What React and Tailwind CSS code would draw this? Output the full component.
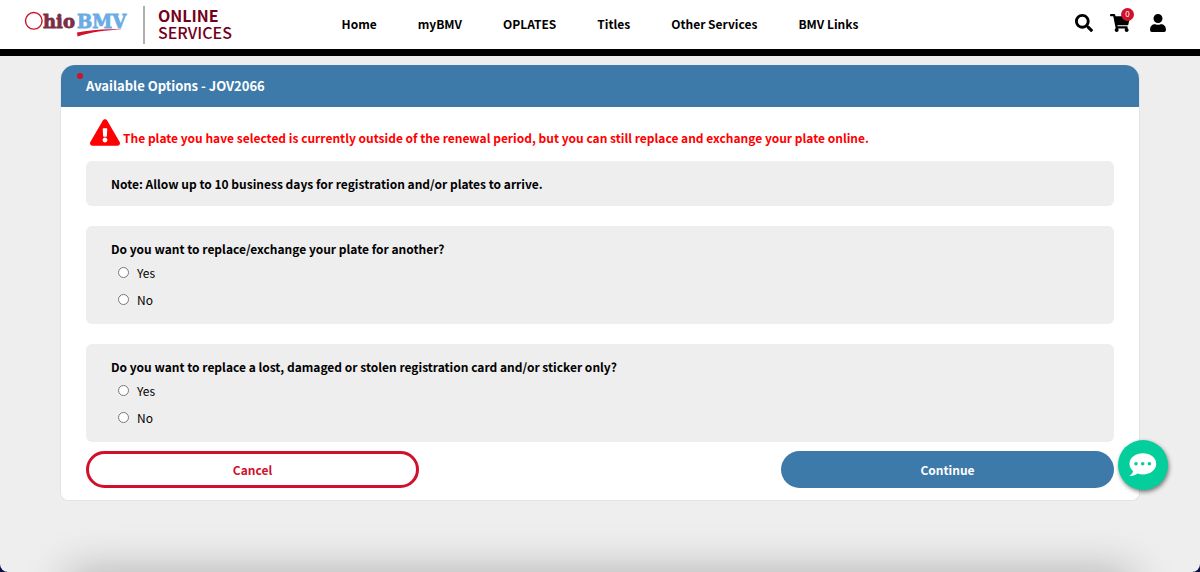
import { FaExclamationTriangle, FaSearch, FaShoppingCart, FaUser } from "react-icons/fa";

const navLinks = ["Home", "myBMV", "OPLATES", "Titles", "Other Services", "BMV Links"];

const questions = [
  { name: "exchange", text: "Do you want to replace/exchange your plate for another?" },
  {
    name: "replace",
    text: "Do you want to replace a lost, damaged or stolen registration card and/or sticker only?",
  },
];

function Logo() {
  return (
    <svg className="mb-1" width="104" height="30" viewBox="0 0 104 30" role="img" aria-label="Ohio BMV">
      <circle cx="9.8" cy="12.8" r="8.3" fill="none" stroke="#d0112b" strokeWidth="1.4" />
      <g fontFamily="DejaVu Serif" fontWeight="700" strokeWidth="0.8">
        <text x="19" y="20" fontSize="18" fill="#7a2f45" stroke="#7a2f45">hio</text>
        <text x="53" y="20" fontSize="18" fill="#6cace4" stroke="#6cace4">BMV</text>
      </g>
      <path d="M53 24.500C66 21.800 82 20.500 99 21.600C82 22 66 24.500 53.500 28.500Z" fill="#d0112b" />
    </svg>
  );
}

function Header() {
  return (
    <header className="grid grid-cols-[1fr_auto_1fr] items-center border-b-[7px] border-black bg-white">
      <a href="#" className="flex h-[49px] items-center pl-6">
        <Logo />
        <span className="ml-[15px] border-l-2 border-[#b0b0b0] pt-px pb-[3px] pl-[13px] text-base leading-[17px] text-[#73001c]">
          <span className="block font-bold">ONLINE</span>
          <span className="block font-medium">SERVICES</span>
        </span>
      </a>

      <nav className="flex gap-[41px] pb-0.5 font-bold">
        {navLinks.map((label) => (
          <a key={label} href="#" className="whitespace-nowrap">
            {label}
          </a>
        ))}
      </nav>

      <div className="flex items-center justify-end gap-[17px] pr-[34px] pb-1">
        <button type="button" aria-label="Search">
          <FaSearch className="size-[18px]" />
        </button>
        <button type="button" aria-label="Cart" className="relative mr-[3px]">
          <FaShoppingCart className="h-[18px] w-5" />
          <span className="absolute -top-1.5 -right-1 flex size-[13px] items-center justify-center rounded-full bg-[#d0112b] text-[8px] leading-none text-white">
            0
          </span>
        </button>
        <button type="button" aria-label="Account">
          <FaUser className="h-[18px] w-4" />
        </button>
      </div>
    </header>
  );
}

function Question({ name, text }) {
  return (
    <fieldset className="mb-5 rounded-md bg-[#eee] px-[25px] pt-3 pb-[11px] last-of-type:mb-0">
      <legend className="float-left w-full font-bold leading-[21px]">{text}</legend>
      {["Yes", "No"].map((option) => (
        <div key={option} className="clear-both flex h-[27px] items-center pl-[7px]">
          <label className="flex items-center gap-2">
            <input type="radio" name={name} value={option} className="size-[11px]" />
            {option}
          </label>
        </div>
      ))}
    </fieldset>
  );
}

function ChatButton() {
  return (
    <button
      type="button"
      aria-label="Chat"
      className="fixed right-8 bottom-[82px] flex size-[50px] items-center justify-center rounded-full bg-[#04ce9b] shadow-[1px_2px_4px_rgba(0,0,0,0.5)]"
    >
      <svg width="28" height="24" viewBox="0 0 28 24">
        <path
          d="M14 0.300C6.500 0.300 0.500 4.800 0.500 10.800C0.500 13.800 1.800 16.300 4 18.100C3.800 20 2.500 21.800 0.200 23C3.500 23.400 6.500 22.300 8.500 20.600C10.200 21.200 12 21.500 14 21.500C21.500 21.500 27.200 16.800 27.200 10.800C27.200 4.800 21.500 0.300 14 0.300Z"
          fill="#fff"
        />
        <circle cx="7" cy="10.8" r="1.8" fill="#04ce9b" />
        <circle cx="13.7" cy="10.8" r="1.8" fill="#04ce9b" />
        <circle cx="20.4" cy="10.8" r="1.8" fill="#04ce9b" />
      </svg>
    </button>
  );
}

export default function App() {
  return (
    <div className="bg-[#0b0b45]">
      <div className="relative min-h-screen overflow-hidden rounded-b-lg bg-[#eee] font-['Noto_Sans_CJK_SC',sans-serif] text-xs leading-5 text-black">
        <Header />

        <main className="mx-[5%] mt-[9px]">
          <section className="rounded-t-[14px] rounded-b-lg border border-t-0 border-[#e3e3e3] bg-white">
            {/* Card title */}
            <div className="relative rounded-t-[14px] bg-[#3d7aaa] px-[25px] py-[11px] text-white">
              <span className="absolute top-2 left-4 size-1.5 rounded-full bg-[#d0112b]" />
              <h1 className="text-[13px] font-bold leading-5">Available Options - JOV2066</h1>
            </div>

            <form className="px-[25px] pt-[9px] pb-3">
              <div className="mb-[13px] flex items-center gap-[3px] pl-1 text-[#f00]">
                <FaExclamationTriangle className="h-[27px] w-[30px]" />
                <p className="pt-3 font-bold">
                  The plate you have selected is currently outside of the renewal period, but you can
                  still replace and exchange your plate online.
                </p>
              </div>

              <p className="mb-5 rounded-md bg-[#eee] px-[25px] py-3 font-bold leading-[21px]">
                Note: Allow up to 10 business days for registration and/or plates to arrive.
              </p>

              {questions.map((q) => (
                <Question key={q.name} {...q} />
              ))}

              <div className="mt-[9px] flex justify-between font-bold">
                <button
                  type="button"
                  className="h-[37px] w-[32.4%] rounded-full border-[3px] border-[#d0112b] bg-white text-[#d0112b]"
                >
                  Cancel
                </button>
                <button type="button" className="h-[37px] w-[32.4%] rounded-full bg-[#3d7aaa] text-white">
                  Continue
                </button>
              </div>
            </form>
          </section>
        </main>

        {/* Soft shade along the bottom edge */}
        <div className="absolute inset-x-[68px] top-full h-10 shadow-[0_0_44px_rgba(0,0,0,0.28)]" />
        <ChatButton />
      </div>
    </div>
  );
}
